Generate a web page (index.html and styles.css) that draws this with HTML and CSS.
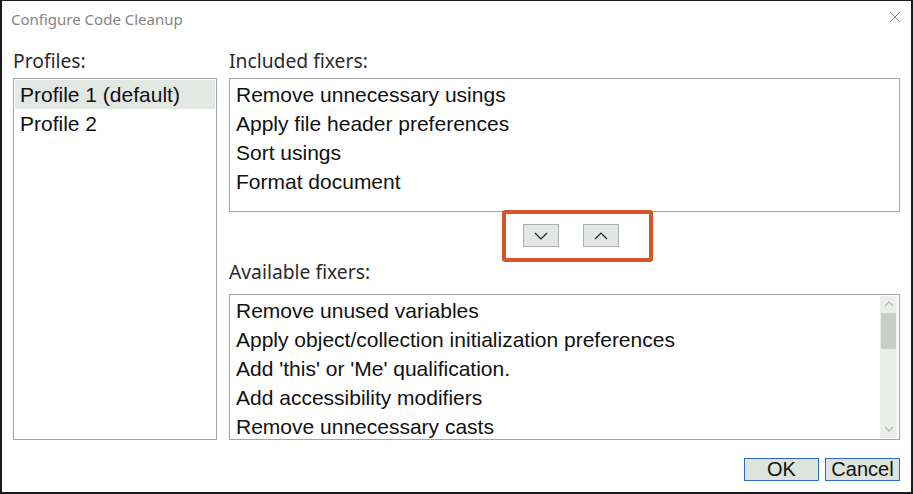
FILE: index.html
```html
<!DOCTYPE html>
<html>
<head>
<meta charset="utf-8">
<link rel="stylesheet" href="styles.css">
</head>
<body>
<div class="dialog">
  <div class="titlebar">
    <span class="title">Configure Code Cleanup</span>
    <svg class="close" width="12" height="12" viewBox="0 0 12 12"><path d="M1 1L11 11M11 1L1 11" stroke="#8a8a8a" stroke-width="1" fill="none"/></svg>
  </div>
  <div class="main">
    <div class="col-left">
      <div class="label">Profiles:</div>
      <div class="listbox profiles">
        <div class="item selected">Profile 1 (default)</div>
        <div class="item">Profile 2</div>
      </div>
    </div>
    <div class="col-right">
      <div class="label">Included fixers:</div>
      <div class="listbox included">
        <div class="item">Remove unnecessary usings</div>
        <div class="item">Apply file header preferences</div>
        <div class="item">Sort usings</div>
        <div class="item">Format document</div>
      </div>
      <div class="mover">
        <button class="arrow-btn"><svg width="14" height="8" viewBox="0 0 14 8"><path d="M1 1L7 7L13 1" stroke="#222" stroke-width="1.2" fill="none"/></svg></button>
        <button class="arrow-btn"><svg width="14" height="8" viewBox="0 0 14 8"><path d="M1 7L7 1L13 7" stroke="#222" stroke-width="1.2" fill="none"/></svg></button>
        <div class="highlight"></div>
      </div>
      <div class="label label-avail">Available fixers:</div>
      <div class="listbox available">
        <div class="items">
          <div class="item">Remove unused variables</div>
          <div class="item">Apply object/collection initialization preferences</div>
          <div class="item">Add 'this' or 'Me' qualification.</div>
          <div class="item">Add accessibility modifiers</div>
          <div class="item">Remove unnecessary casts</div>
        </div>
        <div class="scrollbar">
          <svg class="sb-arrow" width="10" height="6" viewBox="0 0 10 6"><path d="M1 5L5 1L9 5" stroke="#b0b4b0" stroke-width="1.2" fill="none"/></svg>
          <div class="thumb"></div>
          <div class="track"></div>
          <svg class="sb-arrow" width="10" height="6" viewBox="0 0 10 6"><path d="M1 1L5 5L9 1" stroke="#b0b4b0" stroke-width="1.2" fill="none"/></svg>
        </div>
      </div>
    </div>
  </div>
  <div class="footer">
    <button class="btn">OK</button>
    <button class="btn">Cancel</button>
  </div>
</div>
</body>
</html>
```
FILE: styles.css
```css
* { box-sizing: border-box; }
html, body { margin: 0; padding: 0; background: #fff; }
.dialog {
  width: 913px;
  height: 494px;
  border-left: 2px solid #1b1b1b;
  border-top: 1px solid #1b1b1b;
  border-right: 2px solid #1b1b1b;
  border-bottom: 2px solid #1b1b1b;
  display: flex;
  flex-direction: column;
  background: #fff;
  position: relative;
}
.titlebar {
  height: 47px;
  display: flex;
  justify-content: space-between;
  align-items: flex-start;
  padding: 8px 10px 0 9px;
}
.title {
  font-family: "Noto Sans", "Open Sans", sans-serif;
  font-size: 15px;
  color: #858585;
  line-height: 20px;
}
.close { margin-top: 2px; }
.main {
  display: grid;
  grid-template-columns: 204px 1fr;
  column-gap: 12px;
  padding: 0 11px 0 11px;
}
.col-left, .col-right { display: flex; flex-direction: column; }
.label {
  height: 30px;
  font-family: "Noto Sans", "Open Sans", sans-serif;
  font-size: 19.3px;
  line-height: 26px;
  color: #2a2a2a;
  padding-left: 0;
}
.label-avail { height: 32px; line-height: 20px; }
.listbox {
  border: 1px solid #a5a5a5;
  padding: 1px;
  font-family: "Liberation Sans", Arial, sans-serif;
  font-size: 21px;
  color: #111;
}
.profiles { height: 362px; }
.included { height: 134px; }
.available { height: 146px; display: flex; }
.items { flex: 1; }
.item {
  height: 29px;
  line-height: 29px;
  padding-left: 5px;
  white-space: nowrap;
}
.selected { background: #e4e8e4; }
.mover {
  position: relative;
  height: 50px;
  display: flex;
  gap: 24px;
  padding-left: 294px;
  padding-top: 12px;
}
.arrow-btn {
  width: 36px;
  height: 23px;
  border: 1px solid #adadad;
  background: #e3e7e3;
  padding: 0;
  display: flex;
  align-items: center;
  justify-content: center;
}
.highlight {
  position: absolute;
  left: 273px;
  top: -2px;
  width: 151px;
  height: 52px;
  border: 4px solid #d4552a;
  border-radius: 3px;
}
.scrollbar {
  width: 17px;
  margin-right: 1px;
  background: #eaedea;
  display: flex;
  flex-direction: column;
  align-items: center;
}
.sb-arrow { margin: 5px 0 6px; }
.thumb {
  width: 15px;
  height: 36px;
  background: #c9cdc9;
}
.track { flex: 1; }
.footer {
  flex: 1;
  display: flex;
  justify-content: flex-end;
  gap: 6px;
  padding: 18px 11px 0 0;
}
.btn {
  width: 75px;
  height: 23px;
  border: 1px solid #2d6cc0;
  background: #dde3dd;
  font-family: "Liberation Sans", Arial, sans-serif;
  font-size: 20px;
  color: #111;
  padding: 0;
  line-height: 21px;
}
```
